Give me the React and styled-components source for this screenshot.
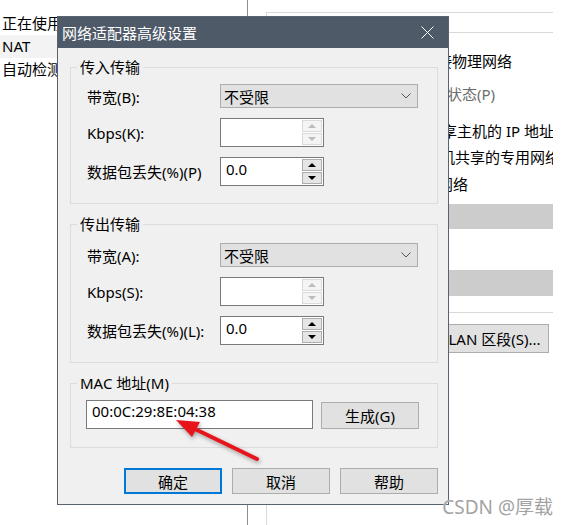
import React from 'react';
import styled, { createGlobalStyle } from 'styled-components';

const GlobalStyle = createGlobalStyle`
  html, body {
    margin: 0;
    padding: 0;
    background: #fff;
  }
  body {
    font-family: "Noto Sans", "Noto Sans CJK SC", sans-serif;
    font-size: 15px;
    color: #000;
  }
`;

const Screen = styled.div`
  position: relative;
  width: 568px;
  height: 525px;
  overflow: hidden;
  display: flex;
  background: #fff;
`;

// ---- window behind the dialog ----
const DeviceList = styled.div`
  width: 248px;
  box-sizing: border-box;
  border-right: 1px solid #8e8e8e;
  padding-top: 12px;
`;

const DeviceRow = styled.div`
  height: 23px;
  line-height: 23px;
  padding-left: 2px;
  white-space: nowrap;
  background: ${p => (p.$selected ? '#f3f3f3' : 'transparent')};
`;

const SettingsPane = styled.div`
  margin: 12px 0 0 18px;
  width: 287px;
  box-sizing: border-box;
  border-top: 1px solid #dadada;
  border-left: 1px solid #dadada;
  display: flex;
  flex-direction: column;
  overflow: hidden;
`;

const Rule = styled.div`
  margin-top: ${p => p.$top}px;
  border-top: 1px solid #d9d9d9;
`;

const PaneText = styled.div`
  margin: ${p => p.$top}px 0 0 ${p => p.$indent}px;
  height: 20px;
  line-height: 20px;
  white-space: nowrap;
  color: ${p => (p.$muted ? '#6d6d6d' : '#000')};
`;

const GrayBar = styled.div`
  margin-top: ${p => p.$top}px;
  height: ${p => p.$h}px;
  background: #cccccc;
`;

const PaneButton = styled.div`
  margin: 11px 0 0 173px;
  width: 109px;
  height: 29px;
  box-sizing: border-box;
  border: 1px solid #adadad;
  background: #e1e1e1;
  display: flex;
  align-items: center;
  justify-content: center;
  white-space: nowrap;
`;

// ---- dialog ----
const Dialog = styled.div`
  position: absolute;
  left: 57px;
  top: 16px;
  width: 392px;
  box-sizing: border-box;
  border: 1px solid #59636f;
  background: #f0f0f0;
  z-index: 1;
  display: flex;
  flex-direction: column;
`;

const TitleBar = styled.div`
  height: 31px;
  background: #4f5a69;
  color: #fff;
  display: flex;
  align-items: center;
  padding-left: 4px;
`;

const CloseButton = styled.div`
  margin-left: auto;
  width: 42px;
  height: 100%;
  display: flex;
  align-items: center;
  justify-content: center;
`;

const Body = styled.div`
  padding: 9px 10px 10px 12px;
  display: flex;
  flex-direction: column;
`;

const Group = styled.fieldset`
  margin: ${p => p.$gap || 0}px 0 0 0;
  padding: 0;
  min-width: 0;
  border: 1px solid #dcdcdc;
`;

const Legend = styled.legend`
  margin-left: 6px;
  padding: 0 3px;
  line-height: 20px;
  font-size: 15px;
`;

const GroupBody = styled.div`
  padding: ${p => p.$top}px 0 ${p => p.$bottom}px ${p => p.$left}px;
  display: flex;
  flex-direction: column;
  gap: 10px;
`;

const FormRow = styled.div`
  display: flex;
  align-items: center;
`;

const Label = styled.div`
  flex: none;
  width: 133px;
  white-space: nowrap;
`;

const Select = styled.div`
  width: 198px;
  height: 24px;
  box-sizing: border-box;
  border: 1px solid #adadad;
  background: #e1e1e1;
  display: flex;
  align-items: center;
  justify-content: space-between;
  padding: 0 6px 0 3px;
`;

const Spin = styled.div`
  width: 104px;
  height: 29px;
  box-sizing: border-box;
  border: 1px solid #7a7a7a;
  background: #fff;
  display: flex;
`;

const FieldText = styled.div`
  flex: 1;
  padding: ${p => p.$pt || 0}px 0 0 5px;
  line-height: 20px;
  white-space: nowrap;
`;

const Stepper = styled.div`
  width: 20px;
  padding: 1px;
  gap: 1px;
  display: flex;
  flex-direction: column;
`;

const StepButton = styled.div`
  flex: 1;
  box-sizing: border-box;
  border: 1px solid ${p => (p.$disabled ? '#dadada' : '#adadad')};
  background: ${p => (p.$disabled ? '#f4f4f4' : '#e5e5e5')};
  display: flex;
  align-items: center;
  justify-content: center;
`;

const Triangle = styled.div`
  width: 0;
  height: 0;
  border-left: 4px solid transparent;
  border-right: 4px solid transparent;
  ${p => (p.$down ? 'border-top' : 'border-bottom')}: 4px solid ${p => (p.$disabled ? '#bcbcbc' : '#000')};
`;

const MacRow = styled.div`
  display: flex;
  align-items: flex-end;
  gap: 8px;
`;

const TextField = styled.div`
  width: 227px;
  height: 29px;
  box-sizing: border-box;
  border: 1px solid #7a7a7a;
  background: #fff;
  display: flex;
`;

const Button = styled.div`
  width: 98px;
  height: ${p => p.$h || 26}px;
  box-sizing: border-box;
  border: ${p => (p.$primary ? '2px solid #0078d7' : '1px solid #adadad')};
  background: #e1e1e1;
  display: flex;
  align-items: center;
  justify-content: center;
  white-space: nowrap;
`;

const Footer = styled.div`
  margin-top: 20px;
  display: flex;
  justify-content: flex-end;
  gap: 10px;
`;

// ---- overlays ----
const Annotation = styled.svg`
  position: absolute;
  left: 0;
  top: 0;
  z-index: 2;
  pointer-events: none;
  filter: drop-shadow(1px 2px 2px rgba(0, 0, 0, 0.35));
`;

const Watermark = styled.div`
  position: absolute;
  right: 15px;
  bottom: 5px;
  z-index: 3;
  font-size: 19px;
  line-height: 26px;
  color: #a3a3a3;
  white-space: nowrap;
  text-shadow: 0 0 1px #fff;
`;

function Chevron() {
  return (
    <svg width="10" height="6" viewBox="0 0 10 6">
      <polyline points="0.5,0.5 5,5 9.5,0.5" fill="none" stroke="#555" strokeWidth="1" />
    </svg>
  );
}

function SpinBox({ value, disabled }) {
  return (
    <Spin>
      <FieldText $pt={1}>{value}</FieldText>
      <Stepper>
        <StepButton $disabled={disabled}><Triangle $disabled={disabled} /></StepButton>
        <StepButton $disabled={disabled}><Triangle $down $disabled={disabled} /></StepButton>
      </Stepper>
    </Spin>
  );
}

function TransferGroup({ title, gap, top, band, kbps, loss }) {
  return (
    <Group $gap={gap}>
      <Legend>{title}</Legend>
      <GroupBody $top={top} $bottom={17} $left={16}>
        <FormRow>
          <Label>{band}</Label>
          <Select>
            <span>不受限</span>
            <Chevron />
          </Select>
        </FormRow>
        <FormRow>
          <Label>{kbps}</Label>
          <SpinBox value="" disabled />
        </FormRow>
        <FormRow>
          <Label>{loss}</Label>
          <SpinBox value="0.0" />
        </FormRow>
      </GroupBody>
    </Group>
  );
}

export default function App() {
  return (
    <>
      <GlobalStyle />
      <Screen>
        <DeviceList>
          <DeviceRow>正在使用文件</DeviceRow>
          <DeviceRow $selected>NAT</DeviceRow>
          <DeviceRow>自动检测</DeviceRow>
        </DeviceList>

        <SettingsPane>
          <Rule $top={19} />
          <PaneText $top={18} $indent={170}>接物理网络</PaneText>
          <PaneText $top={13} $indent={180} $muted>状态(P)</PaneText>
          <PaneText $top={17} $indent={175}>享主机的 IP 地址</PaneText>
          <PaneText $top={6} $indent={173}>机共享的专用网络</PaneText>
          <PaneText $top={7} $indent={171}>网络</PaneText>
          <GrayBar $top={10} $h={25} />
          <GrayBar $top={41} $h={26} />
          <Rule $top={16} />
          <PaneButton>LAN 区段(S)...</PaneButton>
        </SettingsPane>

        <Dialog>
          <TitleBar>
            <span>网络适配器高级设置</span>
            <CloseButton>
              <svg width="13" height="13" viewBox="0 0 13 13">
                <path d="M0.5 0.5 L12.5 12.5 M12.5 0.5 L0.5 12.5" stroke="#fff" strokeWidth="1" />
              </svg>
            </CloseButton>
          </TitleBar>
          <Body>
            <TransferGroup
              title="传入传输"
              top={7}
              band="带宽(B):"
              kbps="Kbps(K):"
              loss="数据包丢失(%)(P)"
            />
            <TransferGroup
              title="传出传输"
              gap={10}
              top={9}
              band="带宽(A):"
              kbps="Kbps(S):"
              loss="数据包丢失(%)(L):"
            />
            <Group $gap={10}>
              <Legend>MAC 地址(M)</Legend>
              <GroupBody $top={7} $bottom={18} $left={15}>
                <MacRow>
                  <TextField>
                    <FieldText>00:0C:29:8E:04:38</FieldText>
                  </TextField>
                  <Button $h={27}>生成(G)</Button>
                </MacRow>
              </GroupBody>
            </Group>
            <Footer>
              <Button $primary>确定</Button>
              <Button>取消</Button>
              <Button>帮助</Button>
            </Footer>
          </Body>
        </Dialog>

        <Annotation width="568" height="525" viewBox="0 0 568 525">
          <line x1="257" y1="459" x2="195" y2="429" stroke="#e8141c" strokeWidth="4" strokeLinecap="round" />
          <polygon points="176,420 200,422 192,437" fill="#e8141c" />
        </Annotation>

        <Watermark>CSDN @厚载</Watermark>
      </Screen>
    </>
  );
}
